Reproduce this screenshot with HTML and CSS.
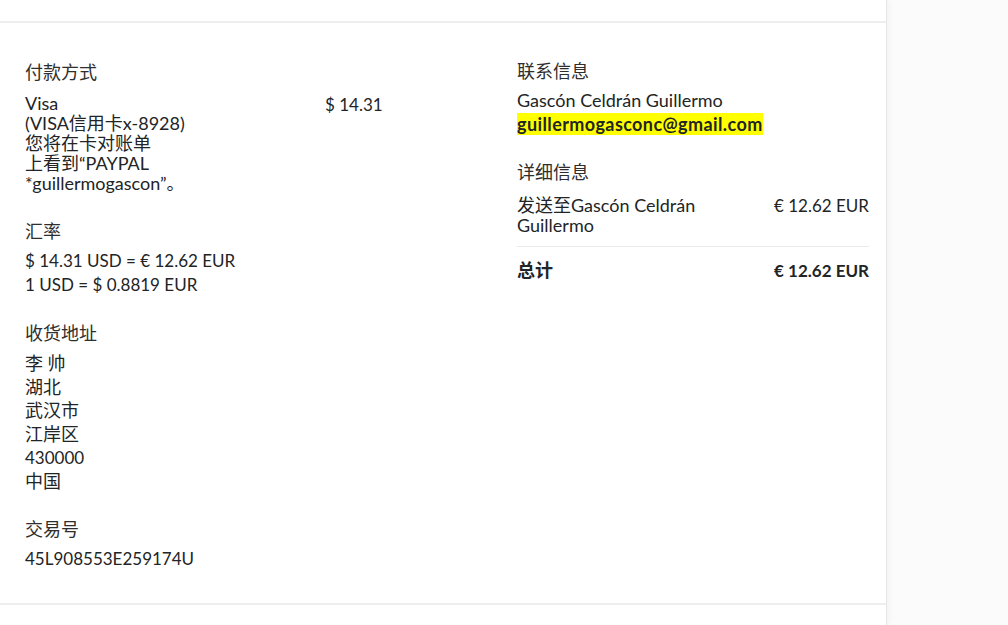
FILE: index.html
```html
<!DOCTYPE html>
<html lang="zh-CN">
<head>
<meta charset="utf-8">
<title>交易详情</title>
<link rel="stylesheet" href="styles.css">
</head>
<body>
<div class="card">
  <div class="details">
    <div class="col col-left">
      <div class="section">
        <h3 class="heading">付款方式</h3>
        <div class="pay-row">
          <div class="pay-text">Visa<br>(VISA信用卡x-8928)<br>您将在卡对账单<br>上看到“PAYPAL<br>*guillermogascon”。</div>
          <div class="pay-amount num">$ 14.31</div>
        </div>
      </div>
      <div class="section s-rate">
        <h3 class="heading">汇率</h3>
        <div class="body-24 num">$ 14.31 USD = € 12.62 EUR<br>1 USD = $ 0.8819 EUR</div>
      </div>
      <div class="section s-addr">
        <h3 class="heading">收货地址</h3>
        <div class="addr">李 帅<br>湖北<br>武汉市<br>江岸区<br><span class="num">430000</span><br>中国</div>
      </div>
      <div class="section s-txn">
        <h3 class="heading">交易号</h3>
        <div class="body-24 num">45L908553E259174U</div>
      </div>
    </div>
    <div class="col col-right">
      <div class="section">
        <h3 class="heading">联系信息</h3>
        <div class="contact">Gascón Celdrán Guillermo<br><span class="email">guillermogasconc@gmail.com</span></div>
      </div>
      <div class="section s-detail">
        <h3 class="heading">详细信息</h3>
        <div class="item-row">
          <div class="item-name">发送至Gascón Celdrán Guillermo</div>
          <div class="item-amount num">€ 12.62 EUR</div>
        </div>
        <div class="total-row">
          <div class="total-label">总计</div>
          <div class="total-amount num">€ 12.62 EUR</div>
        </div>
      </div>
    </div>
  </div>
</div>
</body>
</html>
```

FILE: styles.css
```css
html, body {
  margin: 0;
  padding: 0;
}
body {
  background: #fbfbfb;
  font-family: Lato, "Noto Sans CJK SC", sans-serif;
  font-size: 18px;
  color: #222425;
}
.card {
  width: 887px;
  min-height: 625px;
  background: #ffffff;
  border-right: 1px solid #e6e6e6;
  box-shadow: 2px 0 6px rgba(0, 0, 0, 0.04);
  padding-top: 21px;
  box-sizing: border-box;
}
.details {
  border-top: 2px solid #eeeeee;
  border-bottom: 2px solid #eeeeee;
  display: grid;
  grid-template-columns: 468px 352px;
  column-gap: 24px;
  padding: 37px 0 32px 25px;
}
.num {
  font-size: 17px;
}
.heading {
  margin: 0;
  font-size: 18px;
  font-weight: 400;
  line-height: 24px;
  color: #2e2e2e;
}
.pay-row {
  display: flex;
  margin-top: 9px;
  line-height: 20px;
}
.pay-text {
  width: 300px;
}
.pay-amount {
  padding-top: 2px;
}
.s-rate { margin-top: 26px; }
.s-addr { margin-top: 24px; }
.s-txn { margin-top: 23px; }
.body-24 {
  margin-top: 6px;
  line-height: 24px;
}
.addr {
  margin-top: 7px;
  line-height: 23.6px;
}
.col-right .section:first-child .heading {
  margin-top: -1px;
}
.contact {
  margin-top: 5px;
  line-height: 24px;
}
.email {
  font-weight: 700;
  background: #ffff00;
  letter-spacing: 0.4px;
}
.s-detail { margin-top: 24px; }
.item-row {
  display: flex;
  justify-content: space-between;
  align-items: flex-start;
  margin-top: 11px;
  padding-bottom: 11px;
  border-bottom: 1px solid #eaeaea;
  line-height: 20px;
}
.item-name {
  width: 210px;
}
.item-amount {
  padding-top: 1px;
}
.total-row {
  display: flex;
  justify-content: space-between;
  align-items: baseline;
  margin-top: 11px;
  line-height: 24px;
  font-weight: 700;
}
```
